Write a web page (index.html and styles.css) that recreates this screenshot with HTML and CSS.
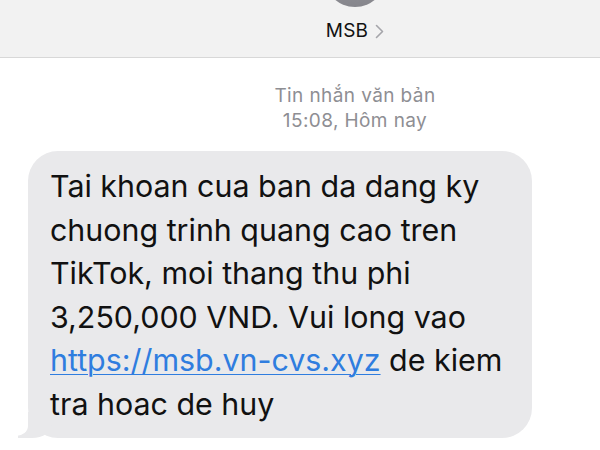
FILE: index.html
```html
<!DOCTYPE html>
<html lang="vi">
<head>
    <meta charset="UTF-8">
    <title>MSB - Tin nhắn</title>
    <link rel="stylesheet" href="styles.css">
</head>
<body>

    <header class="contact-bar">
        <div class="avatar"></div>
        <div class="contact-name">
            <span>MSB</span>
            <svg class="chevron" width="9" height="15" viewBox="0 0 9 15">
                <polyline points="1.5,1.5 7.5,7.5 1.5,13.5" fill="none" stroke="#a5a5aa" stroke-width="1.6" stroke-linecap="round" stroke-linejoin="round"/>
            </svg>
        </div>
    </header>

    <main class="thread">
        <div class="timestamp">
            <div>Tin nhắn văn bản</div>
            <div>15:08, Hôm nay</div>
        </div>

        <div class="bubble">
            <p>Tai khoan cua ban da dang ky<br>
            chuong trinh quang cao tren<br>
            TikTok, moi thang thu phi<br>
            3,250,000 VND. Vui long vao<br>
            <a href="#">https://msb.vn-cvs.xyz</a> de kiem<br>
            tra hoac de huy</p>
        </div>
    </main>

</body>
</html>
```

FILE: styles.css
```css
body {
    margin: 0;
    padding: 0;
    background: #fff;
    font-family: Inter, 'Liberation Sans', sans-serif;
    color: #111;
    width: 600px;
    height: 450px;
    overflow: hidden;
}

.contact-bar {
    background: #f2f2f2;
    border-bottom: 1px solid #d8d8d8;
    height: 57px;
    display: flex;
    flex-direction: column;
    align-items: center;
    padding-left: 110px;
    overflow: hidden;
}

.avatar {
    width: 62px;
    height: 62px;
    border-radius: 50%;
    background: linear-gradient(#a3a3a9, #86868c);
    margin-top: -55px;
    flex-shrink: 0;
}

.contact-name {
    display: flex;
    align-items: center;
    gap: 7px;
    margin-top: 12px;
    font-size: 19px;
    letter-spacing: 0.2px;
    color: #111;
}

.chevron {
    margin-top: 2px;
}

.thread {
    padding-top: 25px;
}

.timestamp {
    padding-left: 110px;
    text-align: center;
    color: #8e8e93;
    font-size: 19px;
    letter-spacing: 0.4px;
    line-height: 25px;
}

.bubble {
    position: relative;
    margin: 18px 0 0 28px;
    width: 504px;
    height: 287px;
    box-sizing: border-box;
    background: #e9e9eb;
    border-radius: 30px;
    padding: 14px 10px 0 22px;
}

.bubble::before {
    content: "";
    position: absolute;
    left: -10px;
    bottom: 0;
    width: 34px;
    height: 26px;
    background: #e9e9eb;
    border-bottom-right-radius: 20px 14px;
}

.bubble::after {
    content: "";
    position: absolute;
    left: -22px;
    bottom: 2px;
    width: 22px;
    height: 30px;
    background: #fff;
    border-bottom-right-radius: 12px 10px;
}

.bubble p {
    position: relative;
    z-index: 1;
    margin: 0;
    font-size: 30.4px;
    line-height: 43.5px;
    color: #111;
}

.bubble a {
    color: #2f7ddf;
    text-decoration: underline;
    text-underline-offset: 3px;
    text-decoration-thickness: 1px;
}
```
